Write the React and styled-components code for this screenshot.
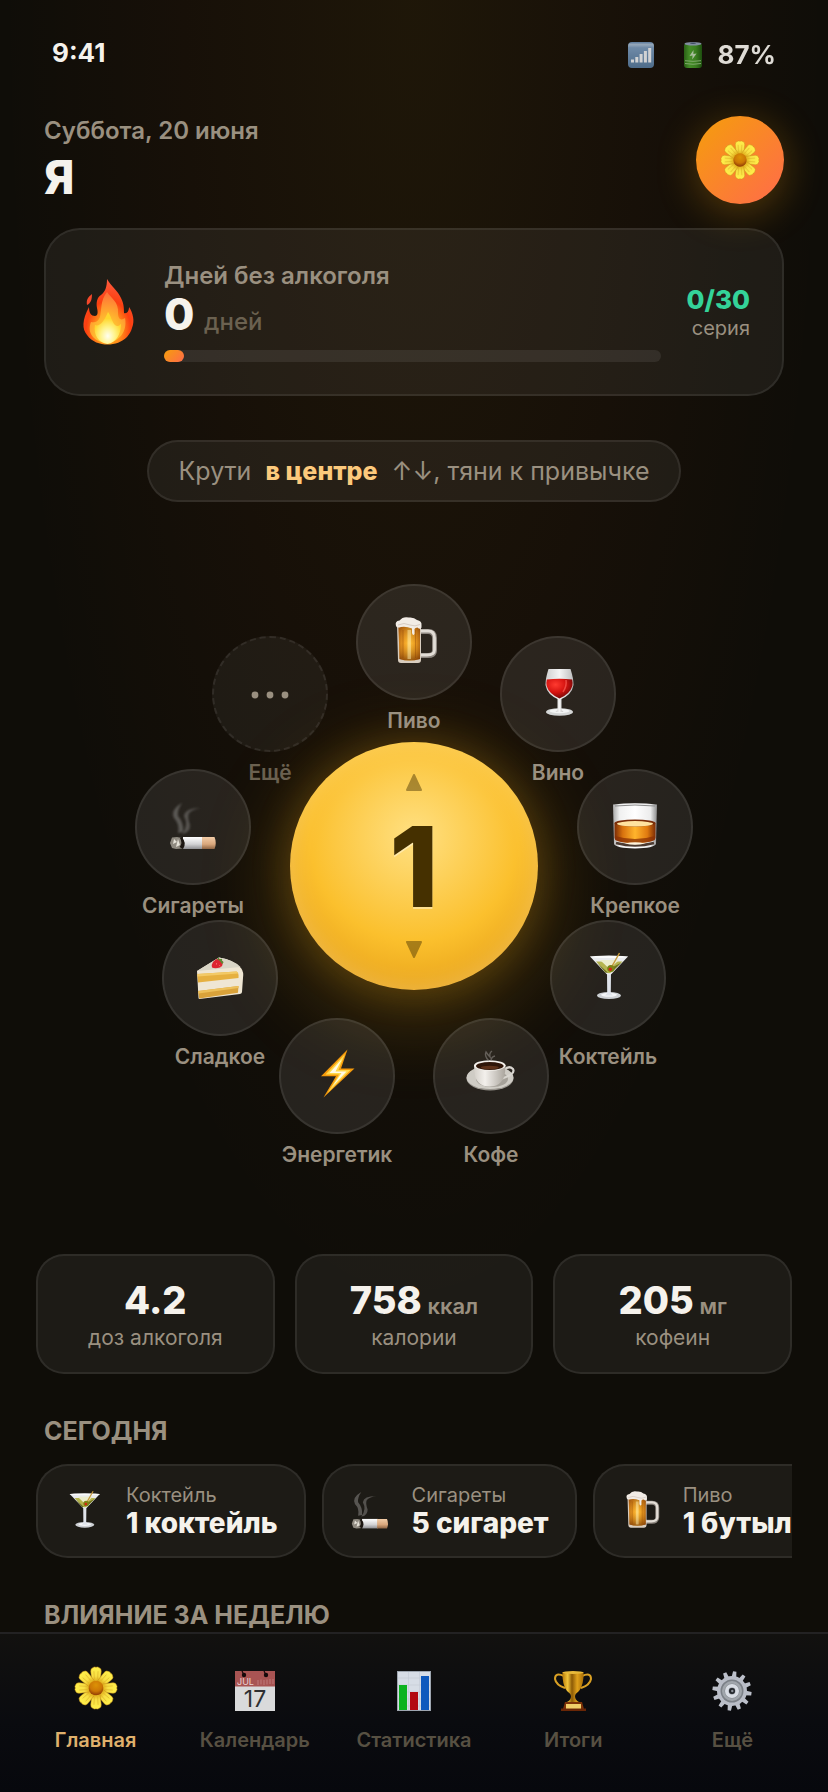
import React, { useState } from 'react'
import styled, { createGlobalStyle, css } from 'styled-components';

const GlobalStyle = createGlobalStyle`
    *{
        box-sizing: border-box;
        margin: 0;
        padding: 0;
    }
    body{
        background: #0f0d08;
        color: #f5f2ec;
        font-family: Inter, 'Noto Sans', sans-serif;
    }
    button{
        border: none;
        background: none;
        color: inherit;
        font: inherit;
        cursor: pointer;
    }
    svg{
        display: block;
        overflow: visible;
    }
`;

/* ---------- icons ---------- */

const petals = [0, 45, 90, 135, 180, 225, 270, 315];

function Flower({ size, id }) {
  return (
    <svg width={size} height={size} viewBox="0 0 40 40" aria-hidden="true">
        <defs>
            <linearGradient id={`${id}-petal`} x1="0" y1="0" x2="0" y2="1">
                <stop offset="0" stopColor="#fff04a" />
                <stop offset=".6" stopColor="#f8df45" />
                <stop offset="1" stopColor="#dba414" />
            </linearGradient>
            <radialGradient id={`${id}-heart`} cx=".5" cy=".3" r=".7">
                <stop offset="0" stopColor="#dc9206" />
                <stop offset=".6" stopColor="#cc7705" />
                <stop offset="1" stopColor="#8f3a05" />
            </radialGradient>
        </defs>
        {petals.map((angle) => (
            <g key={angle} transform={`rotate(${angle} 20 20)`}>
                <path
                    d="M16.200 14.500 L15 4 Q14.800 1.200 17 .6 Q18.600 -.6 20 .3 Q21.400 -.6 23 .6 Q25.200 1.200 25 4 L23.800 14.500 Z"
                    fill={`url(#${id}-petal)`}
                    stroke="#c9941a"
                    strokeWidth=".5"
                />
                <path d="M18.500 12 L18 4 M21.500 12 L22 4" stroke="#dcb125" strokeWidth=".6" />
            </g>
        ))}
        <circle cx="20" cy="20" r="7" fill={`url(#${id}-heart)`} />
    </svg>
  )
}

function Signal() {
  return (
    <svg width="26" height="26" viewBox="0 0 26 26" aria-hidden="true">
        <defs>
            <linearGradient id="signal" x1="0" y1="0" x2="0" y2="1">
                <stop offset="0" stopColor="#6385ab" />
                <stop offset=".1" stopColor="#a3b8cd" />
                <stop offset=".22" stopColor="#7897b8" />
                <stop offset="1" stopColor="#557799" />
            </linearGradient>
        </defs>
        <rect width="26" height="26" rx="4" fill="url(#signal)" />
        <path d="M3 17.500h3v3h-3z M7.300 15h3v5.500h-3z M11.600 12h3v8.500h-3z M15.900 9h3v11.500h-3z M20.200 6h3v14.500h-3z" fill="#e6e8ea" />
    </svg>
  )
}

function Battery() {
  return (
    <svg width="18" height="26" viewBox="0 0 18 26" aria-hidden="true">
        <defs>
            <linearGradient id="battery" x1="0" y1="0" x2="1" y2="0">
                <stop offset="0" stopColor="#2c6a17" />
                <stop offset=".3" stopColor="#4a9a2c" />
                <stop offset=".65" stopColor="#3f8b22" />
                <stop offset="1" stopColor="#1f5510" />
            </linearGradient>
        </defs>
        <rect y="1" width="18" height="25" rx="3" fill="url(#battery)" />
        <ellipse cx="9" cy="1.800" rx="8.500" ry="1.800" fill="#8d9bb0" />
        <ellipse cx="9" cy="1.300" rx="3" ry=".8" fill="#46556e" />
        <path d="M9.500 8 L5.500 14 L8.600 13.600 L8.200 17.500 L12.600 11.500 L9.400 12 Z" fill="#b9d0ad" />
        <path d="M1 18.700 Q9 20 17 18.700 M1 21.500 Q9 23 17 21.500" stroke="#8dbb78" fill="none" />
    </svg>
  )
}

function Flame() {
  return (
    <svg width="60" height="66" viewBox="0 0 60 66" aria-hidden="true">
        <defs>
            <radialGradient id="flame-out" cx=".5" cy=".78" r=".75">
                <stop offset="0" stopColor="#ffd21f" />
                <stop offset=".35" stopColor="#ff8a1a" />
                <stop offset=".6" stopColor="#fb3f10" />
                <stop offset="1" stopColor="#ff5a3c" />
            </radialGradient>
            <radialGradient id="flame-mid" cx=".5" cy=".85" r=".8">
                <stop offset="0" stopColor="#ffe53b" />
                <stop offset=".55" stopColor="#ffad2e" />
                <stop offset="1" stopColor="#ff7438" />
            </radialGradient>
            <radialGradient id="flame-in" cx=".5" cy=".75" r=".55">
                <stop offset="0" stopColor="#fffef0" />
                <stop offset=".5" stopColor="#fff38a" />
                <stop offset="1" stopColor="#ffd72e" />
            </radialGradient>
        </defs>
        <path
            d="M29 0 C33 7 40 12 43 19 C46 25 46 30 46 34 C49 35 51 32 51 28 C55 34 57 42 54 49 C53 53 51 55 49 58 C44 63 37 65.500 29.500 65.500 C22 65.500 14 63 9 56 C4 50 4 41 11 28 C11 34 13 37 17 37 C20 37 20 33 19 29 C18 24 19 18 23 16 C27 13 29 8 29 0 Z"
            fill="url(#flame-out)"
        />
        <path d="M14 15 C10 18 8 21 9 26 C13 24 14 20 14 15 Z" fill="#f4482a" />
        <path
            d="M29 13 C33 19 41 23 40 34 C40 40 43 42 47 39 C49 49 45 61 29.500 64.500 C14 62 9 53 13 43 C16 44 20 43 22 38 C24 30 22 22 29 13 Z"
            fill="url(#flame-mid)"
        />
        <path
            d="M30 33 C33 37 34 43 37 46 C39 48 41 47 43 45 C43 55 38 64 29.500 65 C21 64 15 56 17 46 C21 48 26 43 30 33 Z"
            fill="url(#flame-in)"
        />
    </svg>
  )
}

function Beer({ size = 48 }) {
  return (
    <svg width={size} height={size} viewBox="0 0 48 48" aria-hidden="true">
        <defs>
            <linearGradient id="beer" x1="0" y1="0" x2="1" y2="0">
                <stop offset="0" stopColor="#a85a12" />
                <stop offset=".25" stopColor="#e8951f" />
                <stop offset=".5" stopColor="#ffca45" />
                <stop offset=".8" stopColor="#dd8a18" />
                <stop offset="1" stopColor="#9a4e0c" />
            </linearGradient>
            <linearGradient id="beer-shade" x1="0" y1="0" x2="0" y2="1">
                <stop offset="0" stopColor="#8c4206" stopOpacity=".6" />
                <stop offset=".5" stopColor="#ffb52a" stopOpacity=".3" />
                <stop offset="1" stopColor="#6e2f02" stopOpacity=".7" />
            </linearGradient>
        </defs>
        <path d="M30 13.500 H38 Q44.500 13.500 44.500 20 V32 Q44.500 38 37 37.500 H30" fill="none" stroke="#8d867f" strokeWidth="5" />
        <path d="M30 13 H38 Q44.500 13 44.500 20 V32 Q44.500 37 37 37 H30" fill="none" stroke="#e2ddd6" strokeWidth="2.800" />
        <path d="M7 7 H31 V42 Q31 45 28 45 H11 Q8 45 8 42 Z" fill="#d8cdbf" />
        <path d="M8.500 8 H30 V41 Q19 44 9.500 41 Z" fill="url(#beer)" />
        <path d="M8.500 8 H30 V41 Q19 44 9.500 41 Z" fill="url(#beer-shade)" />
        <path d="M13 12 V40 M25.500 12 V40" stroke="#7d3d05" strokeOpacity=".35" />
        <rect x="17.500" y="12" width="3.500" height="29" fill="#fff0b8" fillOpacity=".45" />
        <path
            d="M6 8 Q4.500 3 9.500 2.500 Q13 -2 19 -.5 Q24 -1 27 2 Q32 3 31.500 7 V9.500 Q30 12 27.500 9.500 Q25 9.500 24.500 11 V16 Q23 18.500 22 15 V10.500 Q16 8 11 9 Q7 10.500 6 8 Z"
            fill="#f2ece6"
        />
        <path d="M8 7 Q14 4 20 7 Q25 9 30 6.500" stroke="#d6cbc2" fill="none" />
    </svg>
  )
}

function Wine() {
  return (
    <svg width="48" height="48" viewBox="0 0 48 48" aria-hidden="true">
        <defs>
            <radialGradient id="wine" cx=".35" cy=".3" r=".8">
                <stop offset="0" stopColor="#ff3a30" />
                <stop offset=".5" stopColor="#d4120f" />
                <stop offset="1" stopColor="#5c0606" />
            </radialGradient>
            <linearGradient id="wine-glass" x1="0" y1="0" x2="1" y2="0">
                <stop offset="0" stopColor="#cfcfcf" />
                <stop offset=".5" stopColor="#f4f4f4" />
                <stop offset="1" stopColor="#bdbdbd" />
            </linearGradient>
        </defs>
        <ellipse cx="25.500" cy="42" rx="13.500" ry="3.800" fill="#d4d6d6" />
        <ellipse cx="25.500" cy="41" rx="10" ry="2.200" fill="#f2f4f4" />
        <path d="M23.500 28 H27.500 V39 Q28 41 29.500 42 H21.500 Q23 41 23.500 39 Z" fill="url(#wine-glass)" />
        <path d="M14.500 -1 H36.500 Q39.500 8 39.500 15 Q38 25 25.500 30 Q13 25 11.500 15 Q11.500 8 14.500 -1 Z" fill="url(#wine-glass)" />
        <path d="M12.800 9.500 Q25.500 8 38.200 9.500 Q39 13 38.300 16 Q36 24 25.500 28.500 Q15 24 12.700 16 Q12 13 12.800 9.500 Z" fill="url(#wine)" />
        <path d="M32 10 Q33 16 29 22" stroke="#ff6a60" strokeWidth="1.500" strokeOpacity=".6" fill="none" />
    </svg>
  )
}

function Whiskey() {
  return (
    <svg width="48" height="48" viewBox="0 0 48 48" aria-hidden="true">
        <defs>
            <linearGradient id="whiskey" x1="0" y1="0" x2="1" y2="0">
                <stop offset="0" stopColor="#7c2c05" />
                <stop offset=".2" stopColor="#d8720e" />
                <stop offset=".5" stopColor="#ffb42c" />
                <stop offset=".8" stopColor="#e07a10" />
                <stop offset="1" stopColor="#7c2c05" />
            </linearGradient>
            <linearGradient id="whiskey-glass" x1="0" y1="0" x2="1" y2="0">
                <stop offset="0" stopColor="#aaaaaa" />
                <stop offset=".15" stopColor="#f0f0f0" />
                <stop offset=".5" stopColor="#ffffff" />
                <stop offset=".85" stopColor="#ececec" />
                <stop offset="1" stopColor="#8d8d8d" />
            </linearGradient>
        </defs>
        <path d="M2 1.500 Q24 -1 46 1.500 L45 41 Q43 45 24 45.500 Q5 45 3 41 Z" fill="url(#whiskey-glass)" />
        <path d="M4 3 Q24 1 44 3" stroke="#8a8a8a" fill="none" />
        <path d="M3.500 20 H44.500 V35 Q43 40 24 40 Q5 40 3.500 35 Z" fill="url(#whiskey)" />
        <ellipse cx="24" cy="20" rx="20.500" ry="3.600" fill="#7a2c08" />
        <ellipse cx="24" cy="20.800" rx="18" ry="2.700" fill="#ffe3a0" />
        <path d="M4 33 Q24 39 44 33 V37 Q38 40 24 40 Q9 40 4 37 Z" fill="#8a3006" fillOpacity=".75" />
        <path d="M5 40 Q24 45 43 40" stroke="#4c3a30" strokeWidth="2.500" fill="none" />
        <path d="M14 40.500 Q24 38 34 40.500 Q24 43 14 40.500 Z" fill="#fff4dc" />
    </svg>
  )
}

function Martini({ size = 48 }) {
  return (
    <svg width={size} height={size} viewBox="0 0 48 48" aria-hidden="true">
        <ellipse cx="25" cy="41.500" rx="12" ry="3.600" fill="#cdd0d4" />
        <ellipse cx="25" cy="40.800" rx="8" ry="2" fill="#f5f6f8" />
        <path d="M23 19 H27 L26.800 38 Q27 40 29 41.500 H21 Q23 40 23.200 38 Z" fill="#dfe3ea" />
        <path d="M6 2.500 H44 L27.500 20 Q25 22 22.500 20 Z" fill="#e9ebee" />
        <path d="M12 7.500 H38.500 L27 18.500 Q25 20 23 18.500 Z" fill="#b5b44e" />
        <path d="M16 6 H35 L25.500 15 Z" fill="#ecedcc" />
        <path d="M13 8.500 L24 18.800 H21.500 Z M37.500 8.500 L30 16 L29 13 Z" fill="#6f741a" />
        <ellipse cx="25" cy="2.800" rx="19" ry="1.200" fill="#fafbfc" />
        <path d="M27 14 L35.500 -1" stroke="#c79a3c" strokeWidth="1.500" />
        <circle cx="26.800" cy="14.500" r="3.600" fill="#7d8416" />
        <circle cx="26.300" cy="15.200" r="1.700" fill="#d12a12" />
    </svg>
  )
}

function Coffee() {
  return (
    <svg width="48" height="48" viewBox="0 0 48 48" aria-hidden="true">
        <defs>
            <linearGradient id="cup" x1="0" y1="0" x2="1" y2="0">
                <stop offset="0" stopColor="#d4d0c9" />
                <stop offset=".35" stopColor="#f3f0ec" />
                <stop offset="1" stopColor="#a9a49c" />
            </linearGradient>
        </defs>
        <ellipse cx="23" cy="26.500" rx="23.500" ry="12" fill="#98948d" />
        <ellipse cx="23" cy="25.500" rx="23.500" ry="11.500" fill="#cfccc5" />
        <ellipse cx="25" cy="27" rx="16" ry="8" fill="#a5a199" />
        <path d="M37 18 Q42 13 46 17 Q49 22 34 27" fill="none" stroke="#d8d5cf" strokeWidth="2.200" />
        <path d="M7 13 Q7 27 12 31 Q16 34.500 22.500 34.500 Q30 34.500 34 30 Q38.500 26 38.500 13 Z" fill="url(#cup)" />
        <ellipse cx="22.800" cy="13.500" rx="15.800" ry="5.200" fill="#f4f1ec" />
        <ellipse cx="22.800" cy="14" rx="13.800" ry="4" fill="#2e1508" />
        <ellipse cx="22.800" cy="15.500" rx="9" ry="1.800" fill="#5c3018" />
        <path d="M22 9 Q17 4 19 0 Q21 3 23 5 Q22 1 25 -1 M24 9 Q24 5 28 4" fill="none" stroke="#8a8580" strokeOpacity=".6" strokeWidth="1.400" />
    </svg>
  )
}

function Bolt() {
  return (
    <svg width="48" height="48" viewBox="0 0 48 48" aria-hidden="true">
        <path d="M34.500 -2.500 L8 24.300 H23 L10.500 45.500 L41.500 16.500 H28 Z" fill="#f59a0b" />
        <path d="M32 2 L12.500 22.500 H26 L14.500 41 L37.500 18 H25.500 Z" fill="#ffd94a" />
        <path d="M29 7 L16.500 21 H28.500 L19 35 L33.500 19.500 H22.500 Z" fill="#fffbe6" />
    </svg>
  )
}

function Cake() {
  return (
    <svg width="48" height="48" viewBox="0 0 48 48" aria-hidden="true">
        <path d="M1 17 Q14 9 23 3.500 Q38 6 45 14 Q48 18 47 24 L46 38 Q46 39.500 44 40 L3.500 45 Q2.500 45 2.500 44 Z" fill="#efe6d3" />
        <path d="M1 17 Q14 9 23 3.500 Q38 6 44.500 13 Z" fill="#d9d5c6" />
        <path d="M1.300 20 L40.500 17.500 Q43 18.500 42.500 24 L2 28.500 Z" fill="#e6b040" />
        <path d="M1.300 20 L40.500 17.500 Q42 18 42.300 19.500 L1.400 22.500 Z" fill="#f3ca67" />
        <path d="M2.200 37 L42.500 32 L42 38.800 L3.200 44.600 Z" fill="#d9a23a" />
        <path d="M2.200 37 L42.500 32 V34 L2.400 39.500 Z" fill="#edc05a" />
        <path d="M17 8 Q22 2 26.500 7 Q27.500 12 24 13.500 Q19 15 16 13.500 Q15 11 17 8 Z" fill="#dd2430" />
        <path d="M20 9.500 l1 .8 M23.500 11.500 l.8 .6" stroke="#ff8d86" />
        <path d="M21 5 Q24 2 23 6 Q27 3 26 7 Q29 8 26 10 Q25 7 21 5 Z" fill="#5b8a34" />
    </svg>
  )
}

function Cigarette({ size = 48, id }) {
  return (
    <svg width={size} height={size} viewBox="0 0 48 48" aria-hidden="true">
        <defs>
            <linearGradient id={`${id}-paper`} x1="0" y1="0" x2="0" y2="1">
                <stop offset="0" stopColor="#ffffff" />
                <stop offset=".6" stopColor="#d2d2d4" />
                <stop offset="1" stopColor="#8f8f92" />
            </linearGradient>
            <linearGradient id={`${id}-filter`} x1="0" y1="0" x2="0" y2="1">
                <stop offset="0" stopColor="#f3cda8" />
                <stop offset=".6" stopColor="#d9a77c" />
                <stop offset="1" stopColor="#8f6544" />
            </linearGradient>
            <filter id={`${id}-haze`} x="-20%" y="-20%" width="140%" height="140%">
                <feGaussianBlur stdDeviation=".9" />
            </filter>
        </defs>
        <g filter={`url(#${id}-haze)`} fill="#6b6865">
            <path d="M13 0 Q1 7 5 15 Q11 21 9 30 L14 29 Q15 20 9 13 Q8 7 13 0 Z" fillOpacity=".75" />
            <path d="M32 5 Q16 5 15 13 Q20 22 13 31 Q21 30 21 22 Q18 14 20 10 Q24 6 32 5 Z" fillOpacity=".7" />
        </g>
        <rect x="14" y="34" width="20" height="12" fill={`url(#${id}-paper)`} />
        <path d="M33 34 H45.500 Q48 40 45.500 46 H33 Z" fill={`url(#${id}-filter)`} />
        <path d="M3 34.500 L8 34 L13 35 Q17 40 14 45.500 L7 46 L3 45 L1 40 Z" fill="#8f8a80" />
        <path d="M5 36 L8 39 L4 41 Z M9 36 L11 42 L7 44 Z" fill="#e6e2d8" />
        <path d="M13 34.500 Q18 40 14 46 L10.500 44 Q14 40 11 35 Z" fill="#1d1712" />
    </svg>
  )
}

function Dots() {
  return (
    <svg width="48" height="48" viewBox="0 0 48 48" fill="#9a9080" aria-hidden="true">
        <circle cx="9" cy="25" r="3.400" />
        <circle cx="24" cy="25" r="3.400" />
        <circle cx="39" cy="25" r="3.400" />
    </svg>
  )
}

function Calendar() {
  return (
    <svg width="40" height="40" viewBox="0 0 40 40" aria-hidden="true">
        <rect width="40" height="40" fill="#d9dadb" />
        <rect width="40" height="15.500" fill="#a85453" />
        <circle cx="9" cy="4" r="2.200" fill="#14090a" />
        <circle cx="31" cy="4" r="2.200" fill="#14090a" />
        <path d="M9 4 L7 0 M31 4 L29 0" stroke="#14090a" strokeWidth="1.200" />
        <path d="M23 9 v5 M26 8.500 v5 M29 9 v5 M32 8.500 v5 M35 8 v5 M38 8 v5" stroke="#c98c8a" strokeOpacity=".6" strokeWidth="1.200" />
        <text x="2" y="14" fontSize="9" fontWeight="400" fill="#e8d3d3">JUL</text>
        <text x="20" y="36" fontSize="23" fontWeight="400" textAnchor="middle" fill="#2e2f31">17</text>
    </svg>
  )
}

function Chart() {
  return (
    <svg width="34" height="40" viewBox="0 0 34 40" aria-hidden="true">
        <rect width="34" height="40" fill="#d7dde6" />
        <path d="M0 7 H34 M0 14 H34 M0 21 H34 M0 28 H34 M0 35 H34 M11.500 0 V40 M22.500 0 V40" stroke="#c2cad5" strokeWidth=".6" />
        <rect x="2" y="14" width="8" height="26" fill="#0bb31f" />
        <rect x="13" y="21" width="8" height="19" fill="#b30a12" />
        <rect x="24" y="5" width="8" height="35" fill="#0f59bd" />
        <rect x=".5" y=".5" width="33" height="39" fill="none" stroke="#9ea6b0" />
    </svg>
  )
}

function Trophy() {
  return (
    <svg width="38" height="40" viewBox="0 0 38 40" aria-hidden="true">
        <defs>
            <linearGradient id="trophy" x1="0" y1="0" x2="1" y2="0">
                <stop offset="0" stopColor="#b87a08" />
                <stop offset=".25" stopColor="#f2c53a" />
                <stop offset=".45" stopColor="#8c5a06" />
                <stop offset=".7" stopColor="#e0a21c" />
                <stop offset="1" stopColor="#a86d07" />
            </linearGradient>
        </defs>
        <path d="M10 5 Q1 1 1 8 Q2 14 11 17 M28 5 Q37 1 37 8 Q36 14 27 17" fill="none" stroke="#d9a024" strokeWidth="2" />
        <path d="M8.500 1 H29.500 Q30 14 25 20 Q21.500 22.500 21 25 Q21 29 25 31 H13 Q17 29 17 25 Q16.500 22.500 13 20 Q8 14 8.500 1 Z" fill="url(#trophy)" />
        <ellipse cx="19" cy="1.500" rx="10.500" ry="1.500" fill="#e8b93a" />
        <path d="M11 31 H28 L30 38 H9 Z" fill="#7d3208" />
        <rect x="7" y="37.500" width="25" height="2.500" fill="#6a2606" />
        <rect x="12" y="33" width="15" height="4.500" fill="#f1cf6a" />
    </svg>
  )
}

const teeth = Array.from({ length: 12 }, (_, i) => i * 30 + 8);

function Gear() {
  return (
    <svg width="40" height="40" viewBox="0 0 40 40" aria-hidden="true">
        {teeth.map((angle) => (
            <path key={angle} d="M17.500 8 L18.300 .4 H21.700 L22.500 8 Z" fill="#bcc0ca" transform={`rotate(${angle} 20 20)`} />
        ))}
        <circle cx="20" cy="20" r="15" fill="#b9bdc7" />
        <circle cx="20" cy="20" r="11.500" fill="#7b8087" />
        <circle cx="20" cy="20" r="10" fill="#a1a6ac" />
        <circle cx="20" cy="20" r="7.500" fill="#868b92" />
        <circle cx="20" cy="20" r="5.200" fill="none" stroke="#d9dde4" strokeWidth="3.600" />
        <circle cx="20" cy="20" r="3" fill="#23262b" />
        <circle cx="20.300" cy="20" r="1.200" fill="#8d929a" />
    </svg>
  )
}

function Triangle({ down }) {
  return (
    <svg width="16" height="17" viewBox="0 0 16 17" aria-hidden="true">
        <path
            d={down ? 'M1 1 H15 L8 16 Z' : 'M8 1 L15 16 H1 Z'}
            fill="currentColor"
            stroke="currentColor"
            strokeWidth="2"
            strokeLinejoin="round"
        />
    </svg>
  )
}

/* ---------- data ---------- */

const habits = [
  { id: 'beer', title: 'Пиво', icon: <Beer /> },
  { id: 'wine', title: 'Вино', icon: <Wine /> },
  { id: 'strong', title: 'Крепкое', icon: <Whiskey /> },
  { id: 'cocktail', title: 'Коктейль', icon: <Martini /> },
  { id: 'coffee', title: 'Кофе', icon: <Coffee /> },
  { id: 'energy', title: 'Энергетик', icon: <Bolt /> },
  { id: 'sweet', title: 'Сладкое', icon: <Cake /> },
  { id: 'smoke', title: 'Сигареты', icon: <Cigarette id="wheel" /> },
  { id: 'more', title: 'Ещё', icon: <Dots />, more: true },
];

const stats = [
  { id: 'alcohol', value: '4.2', label: 'доз алкоголя' },
  { id: 'calories', value: '758', unit: 'ккал', label: 'калории' },
  { id: 'caffeine', value: '205', unit: 'мг', label: 'кофеин' },
];

const today = [
  { id: 'cocktail', title: 'Коктейль', value: '1 коктейль', icon: <Martini size={38} /> },
  { id: 'smoke', title: 'Сигареты', value: '5 сигарет', icon: <Cigarette size={38} id="today" /> },
  { id: 'beer', title: 'Пиво', value: '1 бутылка', icon: <Beer size={38} /> },
];

const tabs = [
  { id: 'home', title: 'Главная', icon: <Flower size={42} id="tab" /> },
  { id: 'calendar', title: 'Календарь', icon: <Calendar /> },
  { id: 'stats', title: 'Статистика', icon: <Chart /> },
  { id: 'results', title: 'Итоги', icon: <Trophy /> },
  { id: 'more', title: 'Ещё', icon: <Gear /> },
];

const streak = 0;
const goal = 30;
const radius = 224;

function place(index) {
  const angle = (index / habits.length) * Math.PI * 2;
  return {
    x: Math.round(Math.sin(angle) * radius),
    y: Math.round(-Math.cos(angle) * radius),
  };
}

/* ---------- page ---------- */

function App() {
  const [amount, setAmount] = useState(1)
  const [active, setActive] = useState('home')

  return (
    <ScreenStyled>
        <GlobalStyle />
        <ContentStyled>
            <StatusBar>
                <span>9:41</span>
                <StatusIcons>
                    <Signal />
                    <Battery />
                    <span>87%</span>
                </StatusIcons>
            </StatusBar>

            <Header>
                <div>
                    <DateText>Суббота, 20 июня</DateText>
                    <Name>Я</Name>
                </div>
                <Avatar aria-label="Профиль"><Flower size={38} id="avatar" /></Avatar>
            </Header>

            <StreakCard>
                <Flame />
                <StreakBody>
                    <StreakTitle>Дней без алкоголя</StreakTitle>
                    <StreakValue>{streak} <span>дней</span></StreakValue>
                    <Track>
                        <Fill style={{ width: `${Math.max(4, (streak / goal) * 100)}%` }} />
                    </Track>
                </StreakBody>
                <StreakGoal>
                    <strong>{streak}/{goal}</strong>
                    <span>серия</span>
                </StreakGoal>
            </StreakCard>

            <Hint>
                <span>Крути</span>
                <strong>в центре</strong>
                <span>↑↓, тяни к привычке</span>
            </Hint>

            <Wheel>
                <Dial>
                    <Step aria-label="Больше" onClick={() => setAmount(amount + 1)}><Triangle /></Step>
                    <output>{amount}</output>
                    <Step aria-label="Меньше" onClick={() => setAmount(Math.max(1, amount - 1))}><Triangle down /></Step>
                </Dial>
                {habits.map((item, index) => {
                    const { x, y } = place(index)
                    return <Habit key={item.id} $x={x} $y={y} $more={item.more}>
                        <HabitCircle $more={item.more}>{item.icon}</HabitCircle>
                        <span>{item.title}</span>
                    </Habit>
                })}
            </Wheel>

            <Stats>
                {stats.map((item) => (
                    <StatCard key={item.id}>
                        <StatValue>{item.value}{item.unit && <small> {item.unit}</small>}</StatValue>
                        <StatLabel>{item.label}</StatLabel>
                    </StatCard>
                ))}
            </Stats>

            <SectionTitle>Сегодня</SectionTitle>
            <TodayList>
                {today.map((item) => (
                    <TodayCard key={item.id}>
                        <TodayIcon>{item.icon}</TodayIcon>
                        <div>
                            <TodayTitle>{item.title}</TodayTitle>
                            <TodayValue>{item.value}</TodayValue>
                        </div>
                    </TodayCard>
                ))}
            </TodayList>

            <SectionTitle>Влияние за неделю</SectionTitle>
        </ContentStyled>

        <TabBar>
            {tabs.map((item) => (
                <Tab key={item.id} $active={active === item.id} onClick={() => setActive(item.id)}>
                    <TabIcon $active={active === item.id}>{item.icon}</TabIcon>
                    <span>{item.title}</span>
                </Tab>
            ))}
        </TabBar>
    </ScreenStyled>
  )
}

const panel = css`
    background: rgba(255, 255, 255, 0.06);
    border: 2px solid rgba(255, 255, 255, 0.08);
`;

const ScreenStyled = styled.div`
    height: 100vh;
    display: flex;
    flex-direction: column;
    background: radial-gradient(ellipse 50% 74% at 50% 0, rgba(245, 158, 11, 0.065), rgba(245, 100, 11, 0.035) 55%, transparent), #0f0d08;
`;

const ContentStyled = styled.main`
    flex: 1;
    min-height: 0;
    overflow: hidden auto;
    scrollbar-width: none;
`;

const StatusBar = styled.div`
    display: flex;
    justify-content: space-between;
    padding: 37px 52px 0;
    font-size: 26px;
    font-weight: 700;
    line-height: 32px;
`;

const StatusIcons = styled.div`
    display: flex;
    align-items: center;
    gap: 16px;
    line-height: 36px;
    opacity: 0.9;
    svg:first-child{
        margin-right: 14px;
    }
`;

const Header = styled.header`
    display: flex;
    align-items: center;
    justify-content: space-between;
    margin-top: 43px;
    padding: 0 44px;
`;

const DateText = styled.p`
    color: #9a9080;
    font-size: 24px;
    font-weight: 600;
    line-height: 28px;
    margin-bottom: 6px;
`;

const Name = styled.h1`
    font-size: 46px;
    font-weight: 800;
    line-height: 52px;
`;

const Avatar = styled.button`
    display: grid;
    place-items: center;
    width: 88px;
    height: 88px;
    border-radius: 50%;
    background: linear-gradient(135deg, #f59e0b, #ff6b4a);
    box-shadow: 0 8px 40px rgba(245, 158, 11, 0.3);
`;

const StreakCard = styled.section`
    ${panel}
    display: flex;
    align-items: center;
    gap: 26px;
    margin: 24px 44px 0;
    padding: 32px;
    border-radius: 36px;
`;

const StreakBody = styled.div`
    flex: 1;
`;

const StreakTitle = styled.h2`
    color: #9a9080;
    font-size: 24px;
    font-weight: 600;
    line-height: 28px;
`;

const StreakValue = styled.p`
    font-size: 44px;
    font-weight: 800;
    line-height: 48px;
    span{
        color: #6b6150;
        font-size: 24px;
        font-weight: 500;
        line-height: 24px;
    }
`;

const Track = styled.div`
    height: 12px;
    margin-top: 12px;
    border-radius: 6px;
    background: rgba(255, 255, 255, 0.08);
`;

const Fill = styled.div`
    height: 100%;
    border-radius: 6px;
    background: linear-gradient(135deg, #f59e0b, #ff6b4a);
`;

const StreakGoal = styled.div`
    display: flex;
    flex-direction: column;
    align-items: flex-end;
    color: #9a9080;
    font-size: 20px;
    line-height: 24px;
    strong{
        color: #34d399;
        font-size: 26px;
        font-weight: 800;
        line-height: 32px;
    }
`;

const Hint = styled.p`
    ${panel}
    display: flex;
    justify-content: center;
    gap: 14px;
    width: fit-content;
    margin: 44px auto 0;
    padding: 16px 30px;
    border-radius: 32px;
    color: #9a9080;
    font-size: 25px;
    line-height: 26px;
    strong{
        color: #fcc97c;
        font-weight: 800;
    }
`;

const Wheel = styled.section`
    position: relative;
    display: grid;
    place-items: center;
    height: 680px;
    margin: 24px 0 48px;
`;

const Dial = styled.div`
    display: flex;
    flex-direction: column;
    align-items: center;
    justify-content: space-between;
    width: 248px;
    height: 248px;
    padding: 32px 0;
    border-radius: 50%;
    color: #453000;
    background: radial-gradient(circle 190px at 50% 38%, #ffe082, #fbc02d 55%, #dd9210);
    box-shadow:
        0 20px 90px rgba(251, 180, 20, 0.28),
        0 0 40px rgba(251, 180, 20, 0.2),
        inset 0 0 24px rgba(255, 255, 255, 0.25);
    output{
        font-size: 112px;
        font-weight: 800;
        line-height: 112px;
        text-shadow: 0 2px 0 rgba(255, 255, 255, 0.4);
    }
`;

const Step = styled.button`
    opacity: 0.45;
`;

const Habit = styled.button`
    position: absolute;
    left: calc(50% + ${(props) => props.$x}px - 58px);
    top: calc(50% + ${(props) => props.$y}px - 58px);
    display: flex;
    flex-direction: column;
    align-items: center;
    gap: 9px;
    width: 116px;
    color: ${(props) => props.$more ? '#6b6150' : '#9a9080'};
    font-size: 21px;
    font-weight: 600;
    line-height: 24px;
    white-space: nowrap;
`;

const HabitCircle = styled.span`
    display: grid;
    place-items: center;
    width: 116px;
    height: 116px;
    border-radius: 50%;
    border: 2px ${(props) => props.$more ? 'dashed' : 'solid'} rgba(255, 255, 255, 0.08);
    background: rgba(255, 255, 255, ${(props) => props.$more ? 0.05 : 0.09});
`;

const Stats = styled.section`
    display: grid;
    grid-template-columns: repeat(3, 1fr);
    gap: 20px;
    padding: 0 36px;
`;

const StatCard = styled.div`
    ${panel}
    padding: 22px 8px;
    border-radius: 28px;
    text-align: center;
`;

const StatValue = styled.p`
    font-size: 38px;
    font-weight: 800;
    line-height: 44px;
    small{
        color: #9a9080;
        font-size: 22px;
        font-weight: 600;
        line-height: 24px;
    }
`;

const StatLabel = styled.p`
    margin-top: 4px;
    color: #9a9080;
    font-size: 21px;
    line-height: 24px;
`;

const SectionTitle = styled.h2`
    margin: 43px 44px 19px;
    color: #9a9080;
    font-size: 25px;
    font-weight: 700;
    line-height: 28px;
    text-transform: uppercase;
`;

const TodayList = styled.div`
    display: flex;
    gap: 16px;
    margin: 0 36px;
    overflow: auto hidden;
    scrollbar-width: none;
`;

const TodayCard = styled.article`
    ${panel}
    flex: none;
    display: flex;
    align-items: center;
    gap: 22px;
    padding: 17px 26px;
    border-radius: 32px;
`;

const TodayIcon = styled.span`
    display: grid;
    place-items: center;
    width: 40px;
`;

const TodayTitle = styled.h3`
    color: #9a9080;
    font-size: 20px;
    font-weight: 400;
    line-height: 24px;
`;

const TodayValue = styled.p`
    font-size: 28px;
    font-weight: 800;
    line-height: 32px;
`;

const TabBar = styled.nav`
    display: grid;
    grid-template-columns: repeat(5, 1fr);
    padding: 37px 16px 40px;
    border-top: 2px solid #232223;
    background: linear-gradient(#12110f, #0a0b0f 55%, #07080d);
`;

const Tab = styled.button`
    display: flex;
    flex-direction: column;
    align-items: center;
    gap: 17px;
    color: ${(props) => props.$active ? '#dfb06c' : '#575042'};
    font-size: 20px;
    font-weight: 600;
    line-height: 24px;
`;

const TabIcon = styled.span`
    display: grid;
    place-items: center;
    height: 40px;
    transform: ${(props) => props.$active ? 'translateY(-4px)' : 'none'};
`;

export default App
